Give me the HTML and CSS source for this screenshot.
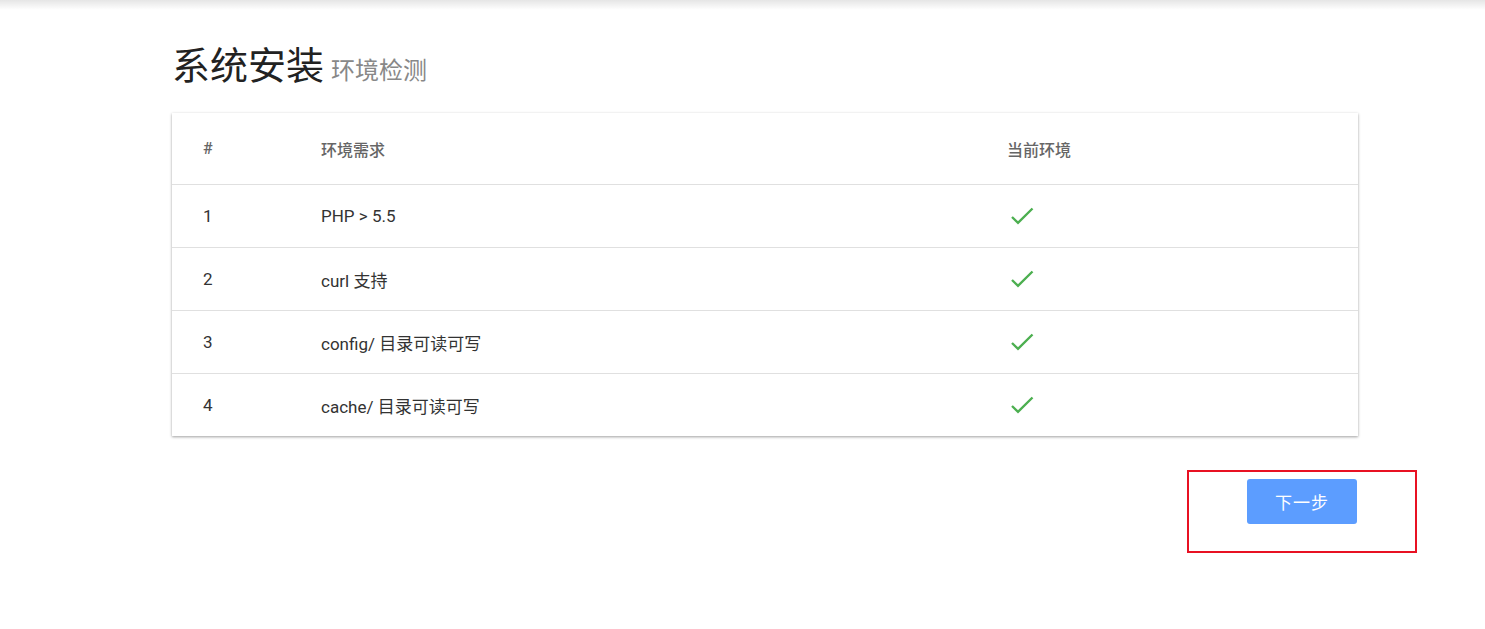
FILE: index.html
```html
<!DOCTYPE html>
<html lang="zh-CN">
<head>
<meta charset="utf-8">
<title>系统安装</title>
<link rel="stylesheet" href="styles.css">
</head>
<body>
<div class="topshadow"></div>
<main class="container">
  <h1 class="title">系统安装<small class="subtitle">环境检测</small></h1>
  <div class="card">
    <table class="env-table">
      <colgroup>
        <col class="c1"><col class="c2"><col class="c3">
      </colgroup>
      <thead>
        <tr><th>#</th><th>环境需求</th><th>当前环境</th></tr>
      </thead>
      <tbody>
        <tr><td>1</td><td>PHP &gt; 5.5</td><td><svg class="check" viewBox="0 0 26 20" width="26" height="20"><polyline points="3,11 9,16.8 23.5,2.5"/></svg></td></tr>
        <tr><td>2</td><td>curl 支持</td><td><svg class="check" viewBox="0 0 26 20" width="26" height="20"><polyline points="3,11 9,16.8 23.5,2.5"/></svg></td></tr>
        <tr><td>3</td><td>config/ 目录可读可写</td><td><svg class="check" viewBox="0 0 26 20" width="26" height="20"><polyline points="3,11 9,16.8 23.5,2.5"/></svg></td></tr>
        <tr><td>4</td><td>cache/ 目录可读可写</td><td><svg class="check" viewBox="0 0 26 20" width="26" height="20"><polyline points="3,11 9,16.8 23.5,2.5"/></svg></td></tr>
      </tbody>
    </table>
  </div>
  <div class="actions">
    <div class="highlight">
      <button class="btn-next" type="button">下一步</button>
    </div>
  </div>
</main>
</body>
</html>
```

FILE: styles.css
```css
html, body {
  margin: 0;
  padding: 0;
  background: #fff;
}
body {
  font-family: Roboto, "Noto Sans CJK SC", sans-serif;
  color: #333;
}
.topshadow {
  height: 10px;
  background: linear-gradient(to bottom, rgba(0,0,0,0.10), rgba(0,0,0,0));
}
.container {
  width: 1186px;
  margin-left: 172px;
  padding-top: 29px;
}
.title {
  margin: 0;
  font-weight: 400;
  font-size: 38px;
  line-height: 54px;
  color: #222;
  letter-spacing: 0;
}
.subtitle {
  margin-left: 7px;
  font-size: 24px;
  color: #888;
  font-weight: 400;
}
.card {
  margin-top: 15px;
  background: #fff;
  box-shadow: 0 1px 3px rgba(0,0,0,0.25), 0 1px 2px rgba(0,0,0,0.15);
}
.env-table {
  width: 100%;
  border-collapse: collapse;
  table-layout: fixed;
}
.c1 { width: 118px; }
.c2 { width: 686px; }
.env-table th {
  text-align: left;
  font-weight: 500;
  font-size: 16px;
  color: #666;
  height: 71px;
  padding: 0 0 0 31px;
  border-bottom: 1px solid #e0e0e0;
}
.env-table td {
  height: 62px;
  padding: 0 0 0 31px;
  font-size: 17px;
  color: #333;
  border-bottom: 1px solid #e0e0e0;
}
.env-table tbody tr:last-child td {
  border-bottom: none;
}
.check {
  display: block;
  fill: none;
  stroke: #4caf50;
  stroke-width: 2.4;
  margin-left: 2px;
}
.actions {
  display: flex;
  justify-content: flex-end;
  margin-top: 34px;
  margin-right: -59px;
}
.highlight {
  width: 226px;
  height: 72px;
  border: 2px solid #e81123;
  display: flex;
  justify-content: center;
  align-items: flex-start;
  padding-top: 7px;
}
.btn-next {
  width: 110px;
  height: 45px;
  background: #5c9dff;
  color: #fff;
  border: none;
  border-radius: 3px;
  font-family: Roboto, "Noto Sans CJK SC", sans-serif;
  font-size: 17px;
  letter-spacing: 1px;
  cursor: pointer;
}
```
